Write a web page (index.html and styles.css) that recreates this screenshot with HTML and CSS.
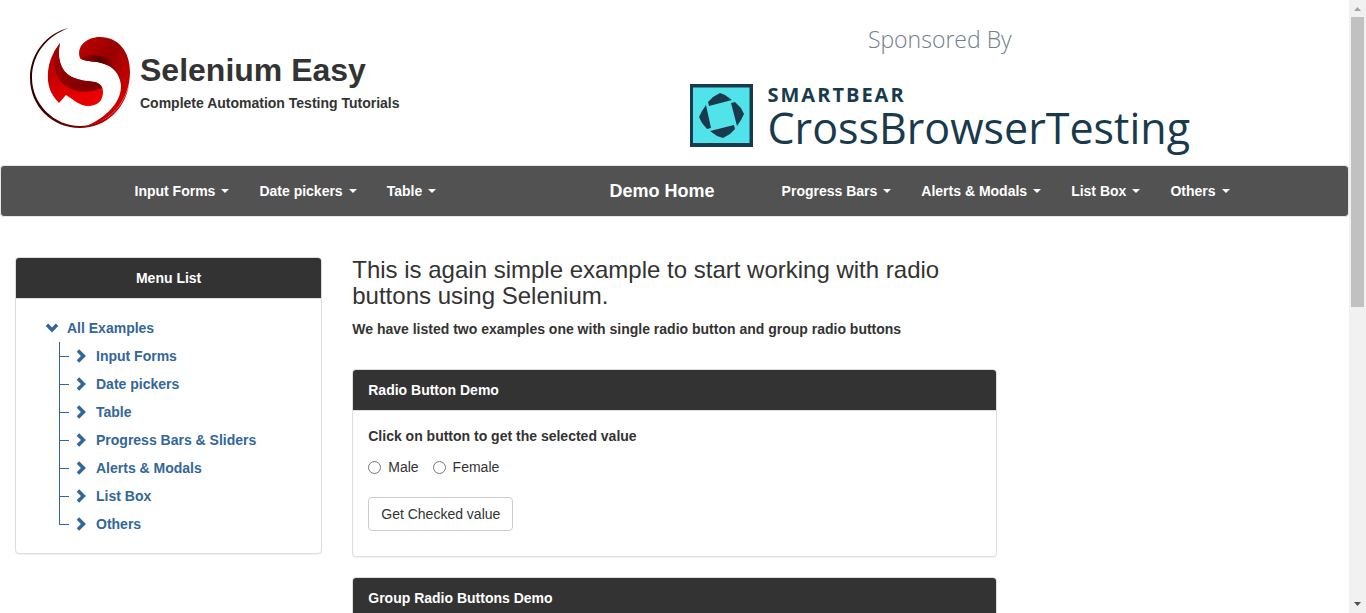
FILE: index.html
```html
<!DOCTYPE html>
<html lang="en">
<head>
<meta charset="utf-8">
<meta name="viewport" content="width=device-width, initial-scale=1">
<title>Selenium Easy Demo</title>
<link rel="stylesheet" href="styles.css">
</head>
<body>
<svg class="defs" aria-hidden="true">
  <symbol id="chev-right" viewBox="0 0 14 14"><path d="M5.200.3 2.700 2.800 6.900 7 2.700 11.200l2.500 2.500L11.900 7z"/></symbol>
  <symbol id="chev-down" viewBox="0 0 14 14"><path d="M.7 5.100 3.200 2.600 7 6.400l3.800-3.800 2.500 2.500L7 11.400z"/></symbol>
</svg>
<div class="page">
  <header class="header">
    <a class="brand" href="#">
      <svg class="brand-logo" viewBox="0 0 100 100" aria-hidden="true">
        <defs>
          <linearGradient id="ring" x1="0" y1="0" x2="1" y2="0"><stop offset="0" stop-color="#2c0000"/><stop offset=".5" stop-color="#7c0000"/><stop offset="1" stop-color="#e60000"/></linearGradient>
          <linearGradient id="head" x1="0" y1="0" x2="1" y2="1"><stop offset="0" stop-color="#c00000"/><stop offset=".4" stop-color="#980000"/><stop offset="1" stop-color="#f00000"/></linearGradient>
          <linearGradient id="fold" x1="0" y1="0" x2="1" y2="0"><stop offset="0" stop-color="#a00000"/><stop offset=".5" stop-color="#5a0000"/><stop offset="1" stop-color="#b80000"/></linearGradient>
          <linearGradient id="tail" x1="0" y1="0" x2="1" y2="1"><stop offset="0" stop-color="#a00000"/><stop offset=".5" stop-color="#dc0000"/><stop offset="1" stop-color="#f00000"/></linearGradient>
          <linearGradient id="shade" x1="0" y1="0" x2="1" y2="1"><stop offset="0" stop-color="#a80000"/><stop offset="1" stop-color="#780000"/></linearGradient>
        </defs>
        <path fill="url(#ring)" d="M39 0C16 5 0 26 0 50c0 28 22 50 50 50 26 0 46-20 49-44-5 24-25 42-49 42C24 98 2 76 2 50 2 26 17 8 39 0z"/>
        <path fill="url(#head)" d="M50 30C46 18 57 9 70 9c18 0 30 14 30 35 0 27-18 50-46 55 18-7 37-22 37-41 0-15-9-21-24-24-8-1-14-1-17-4z"/>
        <path fill="url(#fold)" d="M50 30c7-3 15-4 24-1 11 4 17 13 17 27-3-14-10-19-24-22-8-1-14-1-17-4z"/>
        <path fill="url(#tail)" d="M30 15c-3 14 0 28 12 34 8 4 17 4 23 5 6 2 8 5 8 10 0 9-6 14-15 14-8 0-14-6-22-11l-7 8C20 66 17 56 18 44c1-11 5-20 12-29z"/>
        <path fill="url(#shade)" d="M30 15c-3 14 0 28 12 34 8 4 17 4 23 5 4 1 6 3 7 6-7 3-18 5-28 2C29 57 23 45 24 24z"/>
      </svg>
      <span class="brand-text">
        <strong class="brand-name">Selenium Easy</strong>
        <span class="brand-tag">Complete Automation Testing Tutorials</span>
      </span>
    </a>
    <div class="sponsor">
      <span class="sponsor-label">Sponsored By</span>
      <a class="sponsor-brand" href="#">
        <svg class="sponsor-logo" viewBox="0 0 63 63" aria-hidden="true">
          <path fill="#193a4d" d="M0 0h63v63H0z"/><path fill="#50e4ea" d="M3 3.500h56.500V59H3z"/>
          <path fill="#193a4d" d="M19 22l-1-4 5-5 7-4 5 2 7 5zM41 19l4-1 6 6 3 6-3 6-4 6zM16 21l5 23-4 1-5-6-3-6 3-6zM20 47l24-6 1 4-5 5-7 4-6-2z"/>
        </svg>
        <span class="sponsor-text">
          <span class="sponsor-owner">SMARTBEAR</span>
          <span class="sponsor-name">CrossBrowserTesting</span>
        </span>
      </a>
    </div>
  </header>

  <nav class="navbar">
    <div class="navbar-inner">
      <ul class="nav">
        <li><a href="#">Input Forms <span class="caret"></span></a></li>
        <li><a href="#">Date pickers <span class="caret"></span></a></li>
        <li><a href="#">Table <span class="caret"></span></a></li>
      </ul>
      <a class="nav-home" href="#">Demo Home</a>
      <ul class="nav nav-right">
        <li><a href="#">Progress Bars <span class="caret"></span></a></li>
        <li><a href="#">Alerts &amp; Modals <span class="caret"></span></a></li>
        <li><a href="#">List Box <span class="caret"></span></a></li>
        <li><a href="#">Others <span class="caret"></span></a></li>
      </ul>
    </div>
  </nav>

  <div class="columns">
    <aside class="panel menu">
      <h2 class="panel-heading menu-heading">Menu List</h2>
      <div class="tree">
        <a class="tree-link" href="#"><svg class="chevron"><use href="#chev-down"/></svg>All Examples</a>
        <ul class="branch">
          <li><a class="tree-link" href="#"><svg class="chevron"><use href="#chev-right"/></svg>Input Forms</a></li>
          <li><a class="tree-link" href="#"><svg class="chevron"><use href="#chev-right"/></svg>Date pickers</a></li>
          <li><a class="tree-link" href="#"><svg class="chevron"><use href="#chev-right"/></svg>Table</a></li>
          <li><a class="tree-link" href="#"><svg class="chevron"><use href="#chev-right"/></svg>Progress Bars &amp; Sliders</a></li>
          <li><a class="tree-link" href="#"><svg class="chevron"><use href="#chev-right"/></svg>Alerts &amp; Modals</a></li>
          <li><a class="tree-link" href="#"><svg class="chevron"><use href="#chev-right"/></svg>List Box</a></li>
          <li><a class="tree-link" href="#"><svg class="chevron"><use href="#chev-right"/></svg>Others</a></li>
        </ul>
      </div>
    </aside>
    <main class="content">
      <h1 class="title">This is again simple example to start working with radio buttons using Selenium.</h1>
      <p class="intro">We have listed two examples one with single radio button and group radio buttons</p>
      <section class="panel">
        <h2 class="panel-heading">Radio Button Demo</h2>
        <form class="panel-body">
          <p class="prompt">Click on button to get the selected value</p>
          <div class="radios">
            <label class="radio"><input type="radio" name="gender" value="male">Male</label>
            <label class="radio"><input type="radio" name="gender" value="female">Female</label>
          </div>
          <button class="button" type="button">Get Checked value</button>
        </form>
      </section>
      <section class="panel">
        <h2 class="panel-heading">Group Radio Buttons Demo</h2>
        <div class="panel-body"></div>
      </section>
    </main>
  </div>
</div>
<div class="scrollbar" aria-hidden="true">
  <svg class="scroll-arrow" viewBox="0 0 17 17"><path fill="#a3a3a3" d="M5 11h7L8.500 7z"/></svg>
  <div class="scroll-track"><div class="scroll-thumb"></div></div>
  <svg class="scroll-arrow" viewBox="0 0 17 17"><path fill="#505050" d="M5 6h7l-3.500 4z"/></svg>
</div>
</body>
</html>
```

FILE: styles.css
```css
* { box-sizing: border-box; }
body {
  margin: 0;
  display: flex;
  height: 100vh;
  overflow: hidden;
  background: #fff;
  color: #333;
  font: 14px/20px "Liberation Sans", Arial, sans-serif;
}
a { color: inherit; text-decoration: none; }
ul { list-style: none; margin: 0; padding: 0; }
h1, h2, p { margin: 0; }
.defs { display: none; }
.page { flex: 1; min-width: 0; overflow: hidden; }

/* Header */
.header { display: grid; grid-template-columns: 1fr 1fr; align-items: start; padding-bottom: 8px; }
.brand { display: flex; gap: 10px; padding: 28px 30px 0; }
.brand-logo { width: 100px; height: 100px; flex: none; }
.brand-text { display: flex; flex-direction: column; gap: 5px; padding-top: 24px; }
.brand-name { font-size: 32px; line-height: 36px; }
.brand-tag { font-weight: bold; }
.sponsor {
  display: flex;
  flex-direction: column;
  align-items: center;
  justify-self: start;
  gap: 29px;
  padding: 23px 15px 0;
  color: #193a4d;
  font-family: "Open Sans", sans-serif;
}
.sponsor-label { font-size: 23px; font-weight: 300; line-height: 32px; color: #71808e; }
.sponsor-brand { display: flex; gap: 15px; }
.sponsor-logo { width: 63px; height: 63px; flex: none; }
.sponsor-text { display: flex; flex-direction: column; }
.sponsor-owner { font-size: 20px; font-weight: 700; line-height: 22px; letter-spacing: 2px; }
.sponsor-name { font-size: 43px; line-height: 44px; }

/* Navigation bar */
.navbar { margin-top: 7px; background: #525252; border: 1px solid #e7e7e7; border-radius: 4px; color: #fff; font-weight: bold; }
.navbar-inner {
  display: grid;
  grid-template-columns: 475px auto 1fr;
  align-items: center;
  max-width: 1170px;
  min-height: 50px;
  margin: 0 auto;
  padding: 0 15px;
}
.nav { display: flex; padding-left: 15px; }
.nav a { display: flex; align-items: center; gap: 6px; padding: 15px; white-space: nowrap; }
.nav-right { justify-content: flex-end; }
.nav-home { padding: 15px 30px; font-size: 18px; white-space: nowrap; }
.caret { border: 4px solid transparent; border-top-color: #fff; border-bottom: 0; }

/* Columns */
.columns { display: grid; grid-template-columns: 3fr 6fr 3fr; padding-top: 40px; align-items: start; }
.content { padding: 0 15px; }
.panel { margin-bottom: 20px; background: #fff; border: 1px solid #ddd; border-radius: 4px; box-shadow: 0 1px 1px rgba(0, 0, 0, .05); }
.panel-heading {
  padding: 10px 15px;
  background: #333;
  border-bottom: 1px solid #ddd;
  border-radius: 3px 3px 0 0;
  color: #fff;
  font-size: 14px;
  line-height: 20px;
}
.panel-body { padding: 15px 15px 25px; }
.title { font-size: 24px; font-weight: normal; line-height: 26px; }
.intro { margin: 10px 0 30px; font-weight: bold; }

/* Menu tree */
.menu { margin: 0 15px 20px; }
.menu-heading { text-align: center; }
.tree { padding: 15px 29px; color: #369; font-weight: bold; }
.tree-link { display: flex; align-items: center; gap: 8px; line-height: 28px; }
.chevron { width: 14px; height: 14px; flex: none; fill: currentColor; }
.branch { margin-left: 14px; }
.branch li { display: flex; position: relative; padding-left: 15px; }
.branch li::before { content: ""; position: absolute; left: 0; top: 0; width: 10px; height: 14px; border-bottom: 1px solid #369; }
.branch li::after { content: ""; position: absolute; left: 0; top: 0; width: 1px; height: 100%; background: #369; }
.branch li:last-child::after { height: 14px; }

/* Form */
.prompt { font-weight: bold; }
.radios { display: flex; gap: 14px; margin: 11px 0 20px; }
.radio { display: flex; align-items: center; gap: 7px; }
.radio input { width: 13px; height: 13px; margin: 0; }
.button {
  padding: 6px 12px;
  border: 1px solid #ccc;
  border-radius: 4px;
  background: #fff;
  color: #333;
  font: inherit;
}

/* Scrollbar */
.scrollbar { display: flex; flex-direction: column; width: 17px; background: #f1f1f1; }
.scroll-arrow { width: 17px; height: 17px; flex: none; }
.scroll-track { flex: 1; padding: 0 2px; }
.scroll-thumb { height: 50%; background: #c1c1c1; }
```
